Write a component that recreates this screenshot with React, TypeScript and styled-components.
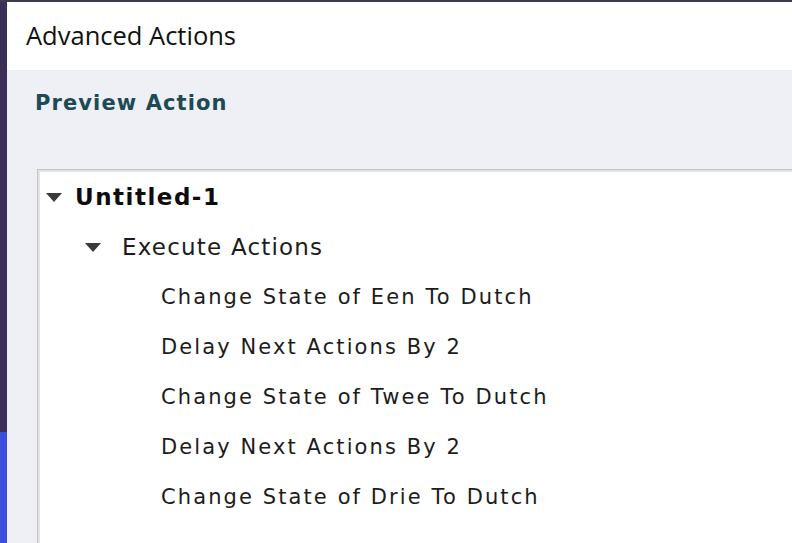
import React from 'react';
import styled, { createGlobalStyle } from 'styled-components';

const GlobalStyle = createGlobalStyle`
    html, body {
        margin: 0;
        padding: 0;
        height: 100%;
        overflow: hidden;
    }
    body {
        background: linear-gradient(to bottom, #3b2f57 432px, #3a4fe2 432px);
    }
    #root {
        height: 100%;
    }
`;

interface TreeItem {
    label: string;
    level: number;
    bold?: boolean;
    expandable?: boolean;
}

const items: TreeItem[] = [
    { label: 'Untitled-1', level: 0, bold: true, expandable: true },
    { label: 'Execute Actions', level: 1, expandable: true },
    { label: 'Change State of Een To Dutch', level: 2 },
    { label: 'Delay Next Actions By 2', level: 2 },
    { label: 'Change State of Twee To Dutch', level: 2 },
    { label: 'Delay Next Actions By 2', level: 2 },
    { label: 'Change State of Drie To Dutch', level: 2 },
];

const App = () => {
    return (
        <>
            <GlobalStyle />
            <Desktop>
                <Window>
                    <TitleBar>
                        <Title>Advanced Actions</Title>
                    </TitleBar>
                    <Body>
                        <SectionHeading>Preview Action</SectionHeading>
                        <TreeBox>
                            {items.map((item, i) => (
                                <Row key={i} level={item.level}>
                                    {item.expandable && <Arrow />}
                                    <Label bold={item.bold} level={item.level}>
                                        {item.label}
                                    </Label>
                                </Row>
                            ))}
                        </TreeBox>
                    </Body>
                </Window>
            </Desktop>
        </>
    );
};

export default App;

const Arrow = () => (
    <ArrowSvg viewBox="0 0 16 9" width="16" height="9">
        <polygon points="0,0 16,0 8,9" fill="#3a3a3a" />
    </ArrowSvg>
);

const Desktop = styled.div`
    height: 100%;
    display: flex;
    padding: 2px 0 0 7px;
    box-sizing: border-box;
    background: linear-gradient(to bottom, #3e3a4d 2px, transparent 2px);
`;

const Window = styled.div`
    flex: 1;
    display: flex;
    flex-direction: column;
    min-width: 0;
`;

const TitleBar = styled.div`
    height: 68px;
    background: #ffffff;
    display: flex;
    align-items: center;
    padding-left: 19px;
    padding-bottom: 2px;
    box-sizing: border-box;
`;

const Title = styled.div`
    font-family: 'Open Sans', 'Noto Sans', sans-serif;
    font-size: 25.5px;
    color: #111111;
`;

const Body = styled.div`
    flex: 1;
    background: #eff0f5;
    display: flex;
    flex-direction: column;
    padding: 20px 0 0 30px;
    min-height: 0;
`;

const SectionHeading = styled.div`
    font-family: 'DejaVu Sans', Verdana, sans-serif;
    font-weight: bold;
    font-size: 21px;
    letter-spacing: 1.1px;
    color: #1d4a54;
    line-height: 26px;
    margin-left: -2px;
`;

const TreeBox = styled.div`
    flex: 1;
    margin-top: 53px;
    background: #ffffff;
    border-top: 1px solid #c4c4c4;
    border-left: 1px solid #c4c4c4;
    box-shadow: inset 2px 2px 0 #e4e4e4;
    padding-top: 2px;
    display: flex;
    flex-direction: column;
`;

const Row = styled.div<{ level: number }>`
    display: flex;
    align-items: center;
    height: 50px;
    padding-left: ${p => (p.level === 0 ? 8 : p.level === 1 ? 47 : 123)}px;
`;

const ArrowSvg = styled.svg`
    flex: none;
    margin-right: 13px;
    margin-top: 1px;
`;

const Label = styled.span<{ bold?: boolean; level: number }>`
    font-family: 'DejaVu Sans', Verdana, sans-serif;
    font-weight: ${p => (p.bold ? 'bold' : 'normal')};
    font-size: ${p => (p.level === 2 ? 21 : 23)}px;
    letter-spacing: ${p => (p.level === 2 ? 2.1 : p.bold ? 1.5 : 1.2)}px;
    color: ${p => (p.bold ? '#0d0d0d' : '#1c1c1c')};
    white-space: nowrap;
    margin-left: ${p => (p.level === 1 ? 8 : 0)}px;
`;
